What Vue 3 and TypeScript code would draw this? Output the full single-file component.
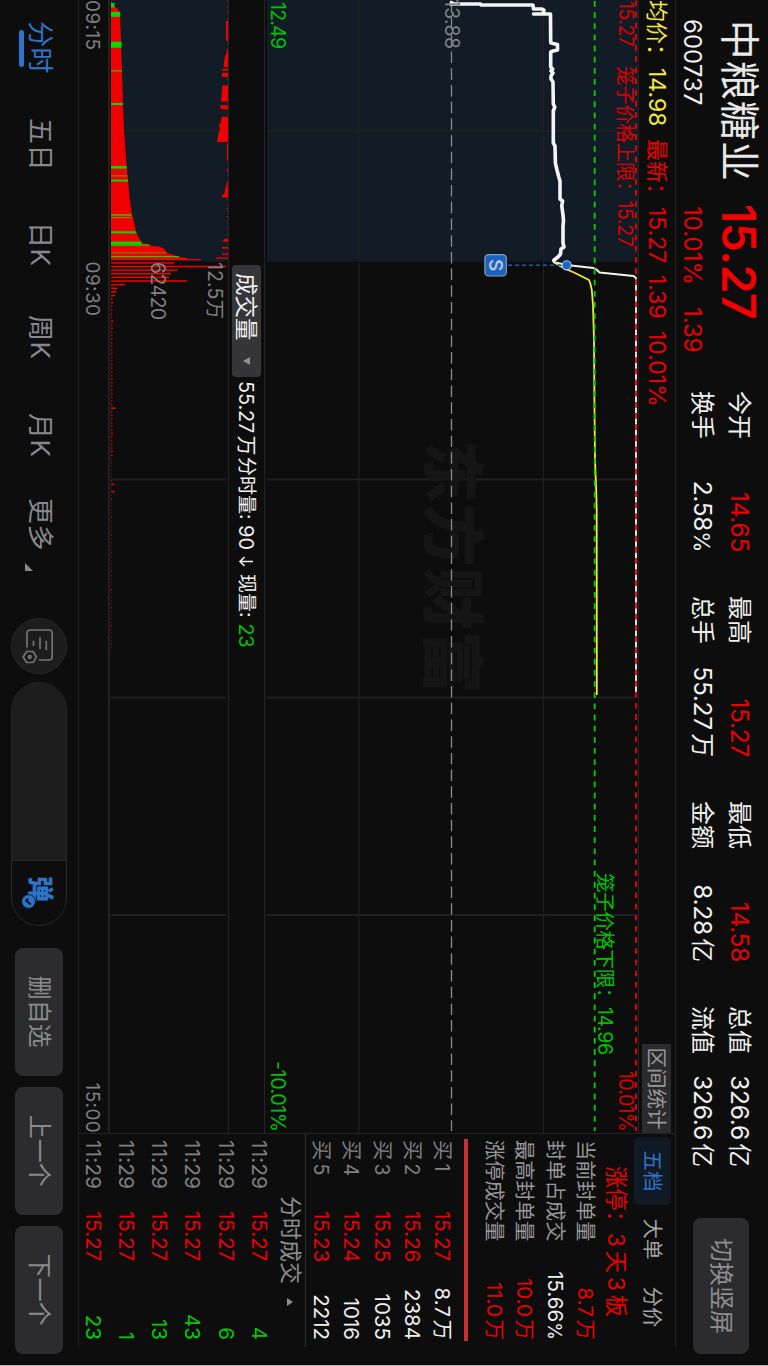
<script setup lang="ts">
type Tone = 'up' | 'down' | 'plain'
type Point = [number, number]

interface Quote { label: string; value: string; unit?: string; tone: Tone }

const quoteColumns: Quote[][] = [
  [{ label: '今开', value: '14.65', tone: 'up' }, { label: '换手', value: '2.58', unit: '%', tone: 'plain' }],
  [{ label: '最高', value: '15.27', tone: 'up' }, { label: '总手', value: '55.27', unit: '万', tone: 'plain' }],
  [{ label: '最低', value: '14.58', tone: 'up' }, { label: '金额', value: '8.28', unit: '亿', tone: 'plain' }],
  [{ label: '总值', value: '326.6', unit: '亿', tone: 'plain' }, { label: '流值', value: '326.6', unit: '亿', tone: 'plain' }],
]

const limitStats: Quote[] = [
  { label: '当前封单量', value: '8.7', unit: '万', tone: 'up' },
  { label: '封单占成交', value: '15.66', unit: '%', tone: 'plain' },
  { label: '最高封单量', value: '10.0', unit: '万', tone: 'up' },
  { label: '涨停成交量', value: '11.0', unit: '万', tone: 'up' },
]

const bids = [
  { level: 1, price: '15.27', qty: '8.7', unit: '万' },
  { level: 2, price: '15.26', qty: '2384' },
  { level: 3, price: '15.25', qty: '1035' },
  { level: 4, price: '15.24', qty: '1016' },
  { level: 5, price: '15.23', qty: '2212' },
]

const ticks = [4, 6, 43, 13, 1, 23].map((qty) => ({ time: '11:29', price: '15.27', qty }))
const periods = ['分时', '五日', '日K', '周K', '月K', '更多']
const actions = ['删自选', '上一个', '下一个']

const PRICE_H = 374
const VOL_H = 118
const BASE = 117
const gridX = [479.5, 697.5, 915]

const toPoints = (pts: Point[], h: number) => pts.map(([t, v]) => `${t},${h - v}`).join(' ')

// [time offset, height above the lower price limit]
const auctionLine: Point[] = [
  [1, 187], [4, 186], [4, 215.5], [5, 216], [5, 268], [9, 268.5], [9, 277], [10, 279], [14, 278],
  [14, 268.5], [14, 285.5], [42.7, 285.7], [43.5, 288], [44.5, 292.5], [50, 292.5], [51, 288], [52, 285.7],
  [67, 285.7], [69, 287.7], [71, 286], [73, 288], [76, 286], [79, 286], [82, 288], [104, 288.3], [107, 289.8],
  [111, 288.3], [143, 288.3], [146, 290], [163, 290.4], [170, 292], [177, 293.8], [181, 295], [199, 295],
  [201, 297.6], [206, 296.8], [215, 298], [221, 298.5], [226, 298], [243, 298], [247, 299], [249, 296],
  [254, 295.5], [257, 293], [260, 289], [262, 288.5],
]
const tradeLine: Point[] = [
  [262, 288], [265, 301.5], [268, 328.5], [269.5, 331.5], [272.5, 334.5], [276, 368.5], [278, 371], [692, 371],
]
const averageLine: Point[] = [
  [262, 289], [265, 293], [269, 301], [273, 310], [276, 316], [280, 324], [284, 325.5], [290, 326.8],
  [305, 328], [340, 329], [400, 329.4], [460, 330], [490, 331.2], [510, 331.7], [695, 331.8],
]

// [time offset, height above the volume baseline]
const auctionVolume: Point[] = [
  [1, 0], [2, 1], [7, 4], [9, 7], [12.7, 9], [42, 10], [71, 11], [85, 11.4], [103, 12], [130, 13], [143, 14],
  [158, 15], [167, 15.7], [182, 17.3], [197, 18.5], [213, 20.7], [222, 23], [232, 25], [238, 28], [243, 31],
  [244, 38], [246, 41], [246.5, 47], [248, 52], [251, 55], [253.5, 57], [254, 60], [255.5, 64], [257, 69],
  [258, 76], [259, 77], [259, 90], [260.2, 90], [260.2, 0],
]
const greenBars: { x: number; w: number; h: number; dim?: boolean }[] = [
  { x: 3, w: 4.5, h: 3.5 }, { x: 12, w: 4.8, h: 9.2 }, { x: 41.7, w: 6, h: 10.5 }, { x: 70, w: 1.6, h: 11, dim: true },
  { x: 103, w: 2, h: 12 }, { x: 166, w: 2.6, h: 15.7 }, { x: 175.2, w: 1.3, h: 16.6, dim: true }, { x: 179.6, w: 2, h: 17 },
  { x: 214, w: 2, h: 20.7, dim: true }, { x: 217, w: 1.2, h: 21.2, dim: true }, { x: 231.3, w: 2.2, h: 25.3 },
  { x: 241.6, w: 3, h: 30.5 }, { x: 244.6, w: 1.2, h: 38 }, { x: 252.2, w: 1.1, h: 55, dim: true }, { x: 256, w: 1.2, h: 68 },
]
const upperBars: [number, number, number, number][] = [
  [10.5, 1.2, 1, 1], [21, 20, 2, 2], [50, 5, 1, 2], [55, 12, 3, 4.5], [69, 1.7, 6, 6], [73, 4, 6, 6],
  [85.5, 16, 5.5, 7], [105.3, 4, 8, 7], [116.7, 7, 6.5, 7.5], [123.5, 7.5, 9, 8], [131, 11, 9, 11],
  [143.5, 17, 1, 1], [169, 3, 1, 1], [182, 13, 1, 4], [194.5, 3, 6, 6], [208, 1, 1.5, 1.5], [216, 1, 1.5, 1.5],
  [239, 2.8, 4, 5], [247, 1.7, 6, 6], [253.5, 1.4, 6, 6], [257.4, 1.4, 12, 12],
]
const upperShape = (b: [number, number, number, number]) =>
  `${b[0]},0 ${b[0] + b[1]},0 ${b[0] + b[1]},${b[3]} ${b[0]},${b[2]}`

const openingBars = [63, 115, 66.5, 60, 58, 76, 14, 6.5, 5.5, 4, 1.5, 2.3, 1.3, 1.2, 1.2, 1.2, 2.2]
const spikes: Record<number, number> = { 320: 2.2, 327: 1.8, 345: 1.5, 382: 1.7, 407: 4.5, 432: 2, 451: 1.8, 483: 3, 490: 3.6 }
const minuteBars = Array.from({ length: 107 }, (_, i) => {
  const x = 262.1 + i * 3.63
  const key = Object.keys(spikes).map(Number).find((s) => Math.abs(s - x) < 1.8)
  const late = x > 455
  const h = i < openingBars.length ? openingBars[i] : key ? spikes[key] : late ? 1 : 1.4
  const o = i < openingBars.length || key ? 1 : late ? (i % 5 === 0 ? 0.8 : 0.45) : 0.9
  return { x, h, o }
})
</script>

<template>
  <main class="screen">
    <div class="stage">
      <header class="head">
        <div class="ident">
          <div class="row-name"><span class="name">中粮糖业</span><b class="last">15.27</b></div>
          <div class="row-code"><span class="code">600737</span><span class="pct">10.01%</span><span class="chg">1.39</span></div>
        </div>
        <div class="quotes">
          <div v-for="(col, i) in quoteColumns" :key="i" class="quote-col">
            <div v-for="q in col" :key="q.label" class="quote">
              <span class="q-label">{{ q.label }}</span>
              <span class="q-val" :class="q.tone">{{ q.value }}<i v-if="q.unit" :class="q.unit === '%' ? 'percent' : 'unit'">{{ q.unit }}</i></span>
            </div>
          </div>
        </div>
        <button class="switch">切换竖屏</button>
      </header>

      <section class="body">
        <div class="charts">
          <div class="strip">
            <span class="avg cjk">均价：</span><span class="avg">14.98</span>
            <span class="up cjk">最新：</span><span class="up">15.27</span>
            <span class="up">1.39</span><span class="up">10.01%</span>
            <span class="range">区间统计</span>
          </div>

          <svg class="price" width="1133" :height="PRICE_H" :viewBox="`0 0 1133 ${PRICE_H}`">
            <rect x="0" y="1" width="261.7" height="371" fill="#121c27" />
            <path d="M131 2V371" stroke="#201f20" stroke-width="1.6" />
            <path v-for="x in gridX" :key="x" :d="`M${x} 3V372`" stroke="#1f1f20" stroke-width="1.8" />
            <path d="M0 95.5H1133M0 280H1133" stroke="#1f1f20" stroke-width="1.2" />
            <text class="mark" x="440" y="209.5" textLength="254">东方财富</text>
            <path d="M0 .5H1133" stroke="#242425" />
            <path d="M0 187.5H1131" stroke="#8b8b8e" stroke-width="1.3" stroke-dasharray="11.5 5.2" stroke-dashoffset="-1.4" />
            <polyline :points="toPoints(auctionLine, PRICE_H)" class="line thick" />
            <polyline :points="toPoints(tradeLine, PRICE_H)" class="line thin" />
            <polyline :points="toPoints(averageLine, PRICE_H)" class="line average" />
            <path d="M0 44.3H1131" stroke="#00d400" stroke-width="1.8" stroke-dasharray="5.8 5.35" stroke-dashoffset="-1" />
            <path d="M0 3H1131" stroke="#f00000" stroke-width="1.8" stroke-dasharray="5.8 5.35" stroke-dashoffset="-.5" />
            <path d="M265.3 131V73" stroke="#1d5dba" stroke-width="1.5" stroke-dasharray="4 3" />
            <circle cx="265.3" cy="72.3" r="4.6" fill="#1a66cc" stroke="#bcd0ec" stroke-width="1.1" />
            <rect x="254.6" y="132.7" width="21.4" height="21.4" rx="3.6" fill="#1a62c2" stroke="#8e9cae" stroke-width="1.2" />
            <text class="sell" x="265.3" y="150" text-anchor="middle">S</text>
            <text class="lab grey" x="-1" y="194.3" textLength="50">13.88</text>
            <text class="lab red" x="1" y="20" textLength="46">15.27</text>
            <text class="lab red" x="66" y="21" textLength="181">笼子价格上限：15.27</text>
            <text class="lab green" x="2" y="367.6" textLength="47">12.49</text>
            <text class="lab green" x="873" y="40.7" textLength="182">笼子价格下限：14.96</text>
            <text class="lab red" x="1071" y="20" textLength="61">10.01%</text>
            <text class="lab green" x="1061" y="367.6" textLength="71">-10.01%</text>
          </svg>

          <div class="vol-title">
            <span class="picker">成交量<i class="caret down-caret"></i></span>
            <span class="v1">55.27<i class="unit-s">万</i></span><span class="v2">分时量:</span><span class="v3">90</span>
            <svg class="arrow" width="13" height="16" viewBox="0 0 13 16"><path d="M6.5 1V14M2 9.5L6.5 14L11 9.5" /></svg>
            <span class="v4">现量:</span><span class="v5">23</span>
          </div>

          <svg class="volume" width="1133" :height="VOL_H" :viewBox="`0 0 1133 ${VOL_H}`">
            <rect x="0" y="0" width="261.7" :height="BASE" fill="#121c27" />
            <path d="M131 1V117" stroke="#201f20" stroke-width="1.6" />
            <path v-for="x in gridX" :key="x" :d="`M${x} 2V117`" stroke="#1f1f20" stroke-width="1.8" />
            <path d="M0 .5H262" stroke="#6a1414" stroke-dasharray="2 4" />
            <polygon :points="toPoints(auctionVolume, BASE)" fill="#f00000" />
            <rect v-for="g in greenBars" :key="g.x" :x="g.x" :y="BASE - g.h" :width="g.w" :height="g.h" :fill="g.dim ? '#6d8a00' : '#00dc00'" />
            <polygon v-for="b in upperBars" :key="b[0]" :points="upperShape(b)" fill="#f00000" />
            <rect v-for="b in minuteBars" :key="b.x" :x="b.x" :y="BASE - b.h" width="1.6" :height="b.h" fill="#ec0000" :opacity="b.o" />
            <text class="lab grey" x="262" y="20" textLength="57">12.5万</text>
            <text class="lab grey" x="262" y="77" textLength="58">62420</text>
          </svg>

          <div class="axis"><span>09:15</span><span>09:30</span><span>15:00</span></div>
        </div>

        <aside class="panel">
          <nav class="tabs"><span class="tab on">五档</span><span class="tab">大单</span><span class="tab">分价</span></nav>
          <div class="streak">涨停：<i>3</i>天<i class="mid">3</i>板</div>
          <div class="stats">
            <div v-for="s in limitStats" :key="s.label" class="stat">
              <span class="s-label">{{ s.label }}</span>
              <span :class="s.tone">{{ s.value }}<i :class="s.unit === '%' ? 'percent' : 'unit-s'">{{ s.unit }}</i></span>
            </div>
          </div>
          <div class="bar"></div>
          <div class="bids">
            <div v-for="b in bids" :key="b.level" class="line3">
              <span class="muted">买<i class="level">{{ b.level }}</i></span><span class="up">{{ b.price }}</span>
              <span class="qty">{{ b.qty }}<i v-if="b.unit" class="unit-s">{{ b.unit }}</i></span>
            </div>
          </div>
          <div class="trade-title">分时成交<i class="caret up-caret"></i></div>
          <div class="ticks">
            <div v-for="(t, i) in ticks" :key="i" class="line3">
              <span class="muted time">{{ t.time }}</span><span class="up">{{ t.price }}</span><span class="qty down">{{ t.qty }}</span>
            </div>
          </div>
        </aside>
      </section>

      <footer class="foot">
        <nav class="periods">
          <span v-for="(p, i) in periods" :key="p" class="period" :class="{ active: i === 0 }">{{ p }}<i v-if="i === 5" class="corner"></i></span>
        </nav>
        <div class="gear">
          <svg width="36" height="36" viewBox="0 0 36 36">
            <path d="M21.5 30H7.5Q4 30 4 26.5V8Q4 4.800 7.5 4.800H30.5Q34 4.800 34 8V18.5" />
            <path d="M14.7 10.7H24M11.3 17H23M14.7 23.5H20" />
            <path d="M31 20.6L36.5 23.9V30.5L31 33.8L25.5 30.5V23.9Z" />
            <circle cx="31" cy="27.2" r="1.3" />
          </svg>
        </div>
        <div class="pill">
          <div class="input"></div>
          <div class="danmu">
            <span class="dan">弹</span>
            <svg class="badge" width="15" height="15" viewBox="0 0 15 15">
              <circle cx="7.5" cy="7.5" r="6.9" fill="#2d74c8" stroke="#0d0d0d" stroke-width=".8" />
              <path d="M4.600 7.8L6.5 10L10.5 5.200" fill="none" stroke="#0d0d0d" stroke-width="1.7" />
            </svg>
          </div>
        </div>
        <div class="actions"><button v-for="a in actions" :key="a" class="action">{{ a }}</button></div>
      </footer>
    </div>
  </main>
</template>

<style>
html, body { background: #0d0d0d; }
</style>

<style scoped>
.screen { width: 768px; height: 1366px; overflow: hidden; background: #0d0d0d; }
.stage {
  box-sizing: border-box; width: 1366px; height: 768px; display: flex; flex-direction: column;
  transform: translateX(768px) rotate(90deg); transform-origin: 0 0;
  border-right: 1px solid #b4b4b4; background: #0d0d0d; color: #f0f0f0;
  font-family: Inter, "Noto Sans CJK SC", sans-serif; white-space: nowrap;
}
span, b { display: block; }
i { font-style: normal; }
button { font: inherit; border: 0; padding: 0; }
.up { color: #ec0000; }
.down { color: #00cc00; }
.plain { color: #f0f0f0; }
.unit { margin-left: 3.5px; font-size: 24px; }
.unit-s { margin-left: 2.5px; }
.percent { font-size: .88em; }

.head { display: flex; height: 92px; flex: none; }
.ident { width: 391px; flex: none; }
.row-name { display: grid; grid-template-columns: 184px 1fr; padding: .5px 0 0 20px; height: 56px; line-height: 56px; align-items: center; }
.name { font-size: 39.5px; letter-spacing: .9px; color: #e8e8e8; }
.last { font-size: 46px; font-weight: 600; letter-spacing: -.4px; color: #f40000; }
.row-code { display: grid; grid-template-columns: 187px 101px 1fr; padding-left: 19px; height: 38px; line-height: 38px; font-size: 24px; }
.pct, .chg { color: #ec0000; }
.quotes { display: grid; grid-template-columns: repeat(4, 161px); gap: 44px; padding-top: 10px; }
.quote { display: flex; justify-content: space-between; height: 37px; line-height: 37px; font-size: 24.5px; }
.q-label { font-size: 24px; }
.q-val { letter-spacing: -.3px; }
.switch { width: 136px; height: 56px; margin: 18.7px 0 0 51px; border-radius: 8px; background: #2c2c2e; color: #8e8e93; font-size: 24px; line-height: 56px; }

.body { display: flex; height: 597px; flex: none; }
.charts { width: 1133px; border-right: 1px solid #222223; flex: none; box-sizing: content-box; }
.strip {
  box-sizing: border-box; display: grid; grid-template-columns: 68px 71px 68px 68px 56px 713px 89px;
  height: 37px; line-height: 37px; font-size: 23px; border-top: 1px solid #242425;
}
.cjk { font-size: 22px; }
.avg { color: #f4e93c; }
.range { height: 29px; margin-top: 4px; line-height: 29px; background: #2b2b2d; color: #98989a; font-size: 20.5px; text-align: center; }
svg { display: block; }
.line { fill: none; stroke-linejoin: round; }
.thick { stroke: #f4f4f4; stroke-width: 3.6; }
.thin { stroke: #f4f4f4; stroke-width: 1.8; }
.average { stroke: #f4e93c; stroke-width: 1.8; }
.mark { font: 900 63px "Noto Sans CJK SC", sans-serif; fill: #151515; }
.sell { font-size: 19px; font-weight: 600; fill: #b8c4d4; }
.lab { font-size: 19.5px; }
.grey { fill: #808084; }
.red { fill: #dc0000; }
.green { fill: #00c400; }

.vol-title {
  box-sizing: border-box; display: flex; align-items: center; height: 37px; padding-left: 265px;
  border-top: 1px solid #242425; border-bottom: 1px solid #242425; font-size: 20px; line-height: 30px;
}
.picker { box-sizing: border-box; position: relative; width: 112px; height: 29px; line-height: 29px; padding-left: 8px; border-radius: 4px; background: #363638; font-size: 22.5px; }
.caret { position: absolute; width: 0; height: 0; border-left: 4.5px solid transparent; border-right: 4.5px solid transparent; }
.down-caret { left: 92px; top: 11px; border-top: 7px solid #8e8e93; }
.up-caret { left: 164px; top: 12px; border-bottom: 6px solid #8e8e93; }
.v1 { width: 76px; margin-left: 4px; letter-spacing: -.2px; }
.v2 { width: 68px; font-size: 19px; }
.v3 { width: 30px; }
.arrow { width: 13px; margin-right: 6px; fill: none; stroke: #f0f0f0; stroke-width: 1.6; }
.v4 { width: 49.5px; font-size: 19px; }
.v5 { color: #00c400; letter-spacing: -.5px; }

.axis { box-sizing: border-box; display: grid; grid-template-columns: 261.5px 821px 51px; height: 31px; line-height: 31px; border-top: 2px solid #212123; font-size: 19px; letter-spacing: .4px; color: #808084; }

.panel { width: 213px; }
.tabs { box-sizing: border-box; display: grid; grid-template-columns: 68px 68px 68px; height: 42px; padding: 3.5px 0 0 3px; border-top: 1px solid #242425; font-size: 20.5px; line-height: 37px; text-align: center; color: #a4a4a6; }
.tab { height: 37px; border-radius: 5px; }
.on { background: #101a25; color: #2f74c8; }
.streak { height: 34px; line-height: 36px; padding-left: 32px; font-size: 22.3px; color: #ec0000; }
.streak i { margin-right: 4px; }
.mid { margin-left: 4px; }
.stats { height: 131.5px; box-sizing: border-box; padding-left: 6px; width: 206px; }
.stat { display: flex; justify-content: space-between; height: 30.4px; line-height: 30.4px; font-size: 20.5px; }
.s-label { color: #98989a; font-size: 20.3px; }
.bar { width: 202px; height: 4px; margin-left: 5px; background: #cc2f30; }
.bids { height: 159px; padding-top: 7px; box-sizing: border-box; border-bottom: 1px solid #303032; }
.line3 { display: grid; grid-template-columns: 71px 60px 69px; height: 30.4px; line-height: 30.4px; padding-left: 6px; font-size: 20.5px; }
.muted { color: #808084; }
.level { margin-left: 3px; font-size: 19.5px; }
.time { letter-spacing: .3px; }
.qty { text-align: right; }
.trade-title { position: relative; height: 29.5px; line-height: 29px; padding-left: 62px; font-size: 22px; color: #8e8e93; }
.ticks .line3 { height: 33.3px; line-height: 33.3px; }

.foot { display: flex; align-items: center; height: 79px; padding-bottom: 1px; border-top: 1px solid #232325; box-sizing: border-box; width: 1346px; overflow: visible; }
.periods { display: grid; grid-template-columns: 97px 104px 93px 98px 85px 120px; padding-left: 21px; width: 597px; flex: none; font-size: 26px; color: #88888d; }
.period { position: relative; line-height: 40px; padding-bottom: 1px; letter-spacing: .4px; }
.active { color: #2f74c8; }
.active::after { content: ""; position: absolute; left: 9px; top: 35.5px; width: 37px; height: 5px; border-radius: 3px; background: #2f74c8; }
.corner { position: absolute; left: 65px; top: 26.5px; border-left: 8px solid transparent; border-bottom: 8px solid #88888d; }
.gear { width: 56px; height: 56px; box-sizing: border-box; border: 1px solid #282829; border-radius: 50%; background: #1c1c1d; padding: 9px 7px; flex: none; }
.gear svg { fill: none; stroke: #747476; stroke-width: 1.7; overflow: visible; }
.pill { display: flex; width: 244px; height: 56px; box-sizing: border-box; margin-left: 8px; border: 1px solid #282829; border-radius: 28px; overflow: hidden; flex: none; }
.input { width: 177px; background: #1d1d1e; border-right: 1px solid #282829; }
.danmu { position: relative; flex: 1; }
.dan { position: absolute; left: 15px; top: 7px; font-size: 26px; font-weight: 900; line-height: 38px; color: #2d74c8; }
.badge { position: absolute; left: 33px; top: 30px; }
.actions { display: flex; gap: 11.5px; margin-left: 22px; flex: none; }
.action { width: 127.5px; height: 48px; border-radius: 8px; background: #2c2c2e; color: #8a8a8e; font-size: 24px; line-height: 48px; }
</style>
